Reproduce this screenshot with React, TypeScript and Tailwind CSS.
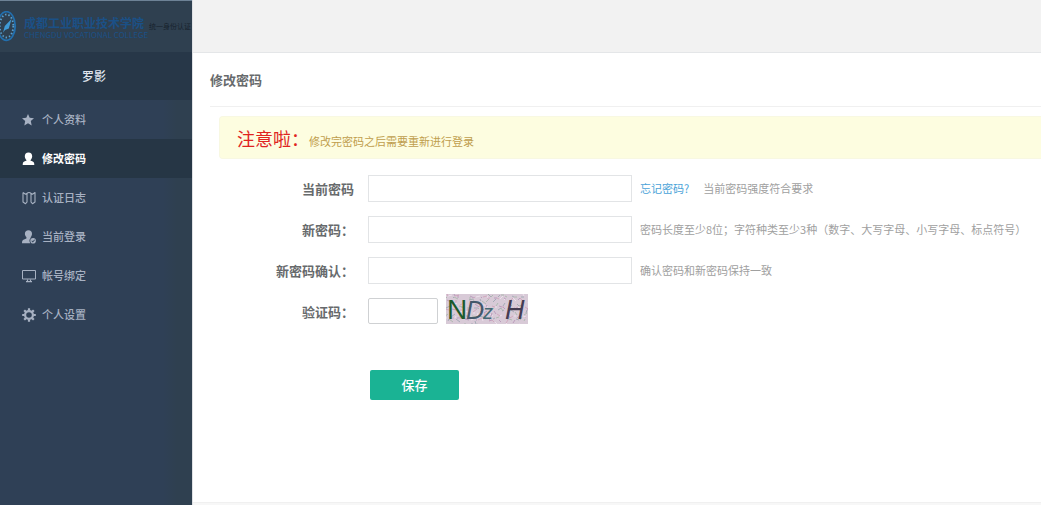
import React, { useState } from "react";
import clsx from "clsx";

const StarIcon = () => (
  <svg viewBox="0 0 14 14" className="h-[14px] w-[14px]" fill="currentColor">
    <path d="M6 .9l1.700 3.900 4.300.4-3.200 2.900.9 4.400L6 10.200l-3.700 2.300.9-4.400L0 5.200l4.300-.4z" />
  </svg>
);

const UserIcon = () => (
  <svg viewBox="0 0 14 14" className="h-[14px] w-[14px]" fill="currentColor">
    <path d="M6.500.5c2.400 0 3.700 1.600 3.700 3.700 0 1.500-.7 2.900-1.600 3.700v.9c1.500.5 3 .9 3.400 2 .2.700.3 1.400.3 2.200H.7c0-.8.1-1.500.3-2.200.4-1.100 1.900-1.500 3.400-2v-.9c-.9-.8-1.600-2.200-1.600-3.700C2.800 2.100 4.100.5 6.500.5z" />
  </svg>
);

const MapIcon = () => (
  <svg
    viewBox="0 0 14 14"
    className="h-[14px] w-[14px]"
    fill="none"
    stroke="currentColor"
    strokeWidth="1.1"
    strokeLinejoin="round"
  >
    <path d="M1 1.500l2.500 1.700L6 1.800c.8-.4 1.200-.4 2 0l2.500 1.400L13 1.500v9.500l-2.500 1.700L9 11.200M1 1.500v9.500l2.500 1.700L5 11.200M5 2.800v8.400M9 2.800v8.400" />
  </svg>
);

const UserCheckIcon = () => (
  <svg viewBox="0 0 14 14" className="h-[14px] w-[14px]" fill="currentColor">
    <path d="M6.500.2c2.200 0 3.500 1.500 3.500 3.500 0 1.300-.5 2.500-1.300 3.300v1c-1 .8-1.400 1.900-1.200 3.200.1.700.4 1.400.8 2H0c0-.9.100-1.800.4-2.400.5-1 2.500-1.600 4-2.300V7c-.9-.8-1.500-2-1.500-3.300C2.900 1.700 4.300.2 6.500.2z" />
    <path
      fillRule="evenodd"
      d="M11.100 8a2.800 2.800 0 110 5.600 2.800 2.800 0 010-5.600zm1.300 1.500l-1.600 1.800-.8-.8-.6.600 1.400 1.400 2.200-2.400z"
    />
  </svg>
);

const MonitorIcon = () => (
  <svg viewBox="0 0 14 14" className="h-[14px] w-[14px]" fill="none" stroke="currentColor">
    <path d="M.5 1.500h13v8.500H.5z" />
    <path d="M5.500 10.500v1.500M8.500 10.500v1.500M4 12.700h6" strokeWidth="1.200" />
  </svg>
);

const GearIcon = () => (
  <svg viewBox="0 0 14 14" className="h-[14px] w-[14px]" fill="none" stroke="currentColor">
    <circle cx="7" cy="7" r="3.900" strokeWidth="2.200" />
    <path
      d="M7 .2v2.400M7 11.400v2.400M.2 7h2.400M11.400 7h2.400M2.200 2.200l1.700 1.700M10.100 10.100l1.700 1.700M2.200 11.800l1.700-1.700M10.100 3.900l1.700-1.700"
      strokeWidth="2.200"
    />
  </svg>
);

const menu = [
  { key: "profile", label: "个人资料", icon: StarIcon },
  { key: "password", label: "修改密码", icon: UserIcon },
  { key: "logs", label: "认证日志", icon: MapIcon },
  { key: "sessions", label: "当前登录", icon: UserCheckIcon },
  { key: "binding", label: "帐号绑定", icon: MonitorIcon },
  { key: "settings", label: "个人设置", icon: GearIcon },
];

const Logo = () => (
  <div className="flex h-[52px] items-center overflow-hidden border-t border-[#6d8296] whitespace-nowrap">
    <svg viewBox="0 0 17 32" className="h-8 w-[17px] shrink-0" fill="none">
      <ellipse cx="6.500" cy="15" rx="8.700" ry="14.300" stroke="#226fae" strokeWidth="1.800" />
      <ellipse
        cx="6.500"
        cy="15"
        rx="6.800"
        ry="11.500"
        stroke="#5a9fce"
        strokeWidth="1.800"
        strokeDasharray="1.500 2"
      />
      <path d="M11.500 8L8.800 17.500 5 19l-2 2.800L4.800 15z" fill="#3f9ad6" />
    </svg>
    <div className="ml-[7px] flex w-[122px] shrink-0 flex-col text-[#1b5086]">
      <span className="text-[12px] leading-4 font-bold">成都工业职业技术学院</span>
      <span className="text-[8px] leading-2">CHENGDU VOCATIONAL COLLEGE</span>
    </div>
    <span className="ml-[3px] text-[7px] text-[#17222d]">统一身份认证</span>
  </div>
);

const Sidebar = () => {
  const [active, setActive] = useState("password");

  return (
    <aside className="w-48 shrink-0 bg-linear-to-r from-[#2f4056] from-85% to-[#2f4050] to-92%">
      <div className="bg-[#2f4050]">
        <Logo />
      </div>
      <div className="flex h-12 items-center justify-center bg-[#273748] pr-1 text-[12px] font-medium text-[#dfe4ed]">
        罗影
      </div>
      <nav>
        {menu.map(({ key, label, icon: Icon }) => (
          <a
            key={key}
            href={`#${key}`}
            onClick={() => setActive(key)}
            className={clsx(
              "flex h-[39px] items-center gap-[6px] pl-[22px] text-[11px]",
              active === key
                ? "bg-[#263645] font-bold text-white"
                : "font-medium text-[#a7b1c2]"
            )}
          >
            <Icon />
            {label}
          </a>
        ))}
      </nav>
    </aside>
  );
};

// short crossing strokes spread over the captcha background
const noise = Array.from({ length: 170 }, (_, i) => ({
  x: (i * 37) % 83,
  y: (i * 23 + Math.floor(i / 5) * 3) % 31,
  dx: ((i * 7) % 9) - 4,
  dy: ((i * 5) % 7) - 3,
  color: ["#b291b5", "#98a2ad", "#cf9fb8", "#a3b5a6", "#f3e6f1"][i % 5],
}));

const Captcha = () => (
  <button type="button" aria-label="验证码" className="cursor-pointer">
    <svg viewBox="0 0 82 30" className="h-[30px] w-[82px]">
      <rect width="82" height="30" fill="#d8cad7" />
      {noise.map((n, i) => (
        <path
          key={i}
          d={`M${n.x} ${n.y}l${n.dx} ${n.dy}`}
          stroke={n.color}
          strokeWidth="0.8"
        />
      ))}
      <g fontFamily="Liberation Sans, sans-serif">
        <text x="1" y="25" fontSize="28" fill="#1d5a2c">N</text>
        <text x="20" y="25" fontSize="25" fontStyle="italic" fill="#44586a">D</text>
        <text x="37" y="25" fontSize="20" fontStyle="italic" fill="#456974">z</text>
        <text x="59" y="25" fontSize="27" fontStyle="italic" fill="#453c52">H</text>
      </g>
    </svg>
  </button>
);

const labelClass = "w-36 shrink-0 text-right text-[13px] leading-6 font-bold text-[#676a6c]";
const inputClass = "h-[27px] border border-[#e2e4e6] bg-white px-2 text-[12px] outline-none";
const hintClass = "text-[11px] text-[#a0a0a0]";

type FieldProps = {
  id: string;
  label: string;
  children: React.ReactNode;
};

const Field = ({ id, label, children }: FieldProps) => (
  <div className="flex items-center">
    <label htmlFor={id} className={labelClass}>
      {label}
    </label>
    <input id={id} type="password" className={clsx(inputClass, "ml-[14px] w-[264px]")} />
    <div className="ml-2 flex gap-[14px] whitespace-nowrap">{children}</div>
  </div>
);

const App = () => {
  return (
    <div
      lang="zh-CN"
      className="flex min-h-screen w-full bg-white font-['Noto_Sans_CJK_SC',sans-serif]"
    >
      <Sidebar />
      <div className="flex min-w-0 flex-1 flex-col overflow-hidden border-l border-[#dfe1e4]">
        <header className="h-[53px] border-b border-[#e4e6e8] bg-[#f2f2f2]" />
        <main className="flex-1 pl-[17px]">
          <h1 className="flex h-[54px] items-center border-b border-[#f0f0f0] text-[13px] font-bold text-[#676a6c]">
            修改密码
          </h1>
          <div className="mt-[9px] ml-[9px] flex h-[43px] items-baseline rounded-l-sm border border-r-0 border-[#f8f8e2] bg-[#fdfde0] pt-[9px] pl-[17px] whitespace-nowrap">
            <strong className="text-[18px] leading-6 font-normal text-[#e0241f]">注意啦：</strong>
            <span className="text-[11px] text-[#bf9d4d]">修改完密码之后需要重新进行登录</span>
          </div>

          <form className="mt-4 flex flex-col gap-[14px]" onSubmit={(e) => e.preventDefault()}>
            <Field id="current" label="当前密码">
              <a href="#forgot" className="text-[11px] text-[#4aa3d8]">
                忘记密码?
              </a>
              <span className={hintClass}>当前密码强度符合要求</span>
            </Field>
            <Field id="next" label="新密码：">
              <span className={hintClass}>
                密码长度至少8位；字符种类至少3种（数字、大写字母、小写字母、标点符号）
              </span>
            </Field>
            <Field id="confirm" label="新密码确认：">
              <span className={hintClass}>确认密码和新密码保持一致</span>
            </Field>
            <div className="-mt-1 flex items-end">
              <label htmlFor="captcha" className={labelClass}>
                验证码：
              </label>
              <input
                id="captcha"
                type="text"
                className="ml-[14px] h-[26px] w-[70px] rounded-xs border border-[#cfd1d3] px-2 text-[12px] outline-none"
              />
              <div className="ml-2 flex">
                <Captcha />
              </div>
            </div>
            <div className="mt-8 pl-40">
              <button
                type="submit"
                className="h-[30px] w-[89px] rounded-xs bg-[#1ab394] text-[13px] font-medium text-white"
              >
                保存
              </button>
            </div>
          </form>
        </main>
        <footer className="h-[3px] border-t border-[#f0f0f0] bg-[#f7f7f7]" />
      </div>
    </div>
  );
};

export default App;
